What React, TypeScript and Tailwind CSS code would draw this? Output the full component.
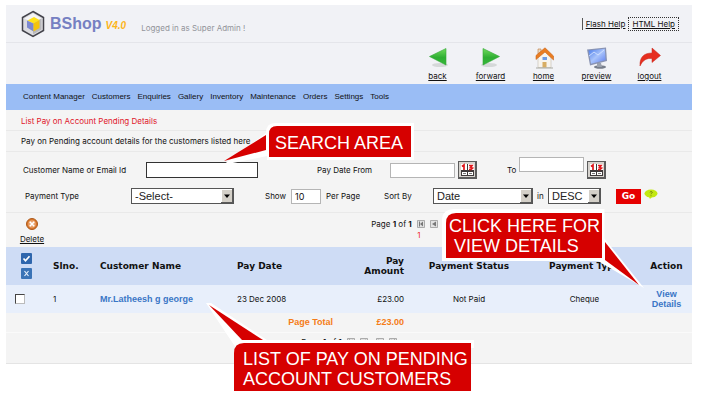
import type { ReactNode } from "react";

const navItems = [
  "Content Manager",
  "Customers",
  "Enquiries",
  "Gallery",
  "Inventory",
  "Maintenance",
  "Orders",
  "Settings",
  "Tools",
];

function Logo() {
  return (
    <svg width="24" height="28" viewBox="0 0 24 28" aria-hidden="true">
      <path d="M12 1.5 22.5 7.5v13L12 26.5 1.5 20.5v-13Z" fill="#dcdce0" stroke="#43434b" strokeWidth="1.5" />
      <path d="M12 3.5 20.5 8.5 12 13 3.5 8.5Z" fill="#f5f5f7" />
      <path d="M12 13 20.5 8.5v11L12 24.5Z" fill="#b9b9bd" />
      <path d="M6.5 10.5 13 7l5.5 3-6 3.5Z" fill="#ffe21a" />
      <path d="M6 10.5 12.5 13.500v8L6 17.500Z" fill="#7c88cf" />
      <path d="M12.5 13.500 18.500 10v8l-6 3.500Z" fill="#f4c30c" />
    </svg>
  );
}

function ArrowIcon({ flip = false }: { flip?: boolean }) {
  return (
    <svg width="22" height="22" viewBox="0 0 22 22" className={flip ? "-scale-x-100" : ""} aria-hidden="true">
      <defs>
        <linearGradient id={flip ? "greenB" : "greenA"} x1="0" y1="0" x2="0" y2="1">
          <stop offset="0" stopColor="#6fdc5a" />
          <stop offset="0.55" stopColor="#2fae33" />
          <stop offset="1" stopColor="#35b83a" />
        </linearGradient>
      </defs>
      <ellipse cx="9" cy="18" rx="8" ry="2" fill="#d5d8d9" />
      <path d="M3 1.5 19.5 9.5 3 18Z" fill={flip ? "url(#greenB)" : "url(#greenA)"} stroke="#33a637" strokeWidth="0.6" />
    </svg>
  );
}

function HomeIcon() {
  return (
    <svg width="22" height="22" viewBox="0 0 22 22" aria-hidden="true">
      <path d="M5 10v10.5h13V10l-6.5-6Z" fill="#f7f4ee" stroke="#c9c3b8" strokeWidth="0.7" />
      <path d="M5 2h3v5H5Z" fill="#e9d9c4" stroke="#c07b3c" strokeWidth="0.6" />
      <path d="m3 12.500v-4L12 .8l8.500 8.200v4l-8.500-8Z" fill="#ea7d22" stroke="#c9651b" strokeWidth="0.6" />
      <path d="M9.5 10h4.500v3H9.500Z" fill="#6e9be6" />
      <path d="M9.5 15h4v5.500h-4Z" fill="#d7ad63" />
      <path d="M3 21h17" stroke="#a9a9a2" />
    </svg>
  );
}

function PreviewIcon() {
  return (
    <svg width="22" height="22" viewBox="0 0 22 22" aria-hidden="true">
      <defs>
        <linearGradient id="screen" x1="0" y1="0" x2="1" y2="1">
          <stop offset="0" stopColor="#4a7bea" />
          <stop offset="0.5" stopColor="#a9c4fb" />
          <stop offset="1" stopColor="#5c7df0" />
        </linearGradient>
      </defs>
      <ellipse cx="14" cy="20" rx="6" ry="1.8" fill="#777e8b" />
      <path d="M11 16h4l1 4h-5Z" fill="#9aa1ae" />
      <path d="M1 2.5 20 .5l1 13.500L4 18.500Z" fill="#8993b2" />
      <path d="M2.5 3.5 18.8 1.800l.8 11.200L5 16.800Z" fill="url(#screen)" />
      <path d="m3 9 5-4 4 3 6-5" stroke="#d3e1ff" strokeWidth="0.9" fill="none" />
    </svg>
  );
}

function LogoutIcon() {
  return (
    <svg width="22" height="22" viewBox="0 0 22 22" aria-hidden="true">
      <path d="M1 19C.5 10 5 6 13 6V1l8.500 7.500-8.500 7V11.500C7.500 11 4 13 1 19Z" fill="#e62e1f" stroke="#c4281d" strokeWidth="0.5" />
    </svg>
  );
}

const tools: { label: string; icon: ReactNode }[] = [
  { label: "back", icon: <ArrowIcon flip /> },
  { label: "forward", icon: <ArrowIcon /> },
  { label: "home", icon: <HomeIcon /> },
  { label: "preview", icon: <PreviewIcon /> },
  { label: "logout", icon: <LogoutIcon /> },
];

function CalendarButton({ label }: { label: string }) {
  return (
    <button type="button" aria-label={label} className="h-[18px] w-[19px] shrink-0">
      <svg width="19" height="18" viewBox="0 0 19 18" aria-hidden="true">
        <path d="M0 0h19v18H0Z" fill="#5c5c5c" />
        <path d="M1 1h16v15H1Z" fill="#d6d3ce" />
        <path d="M3 3h13v12H3Z" fill="#3f3a3a" />
        <path d="M3 3h6v6H3ZM10 3h6v6h-6ZM4 11h5v3H4ZM10 11h5v3h-5Z" fill="#fff" />
        <path d="M4 5.5 6 4V9M11 4.500h3L12.500 6.500l2 .6L13 8.500h-2" stroke="#e0161b" strokeWidth="1.7" fill="none" />
        <path d="M5 12.500h3M11 12.500h3" stroke="#777" strokeWidth="1.2" />
      </svg>
    </button>
  );
}

function SelectBox({ id, options, width }: { id: string; options: string[]; width: string }) {
  return (
    <div className={`relative h-4 shrink-0 ${width}`}>
      <select
        id={id}
        className="block h-4 w-full appearance-none border border-[#555] bg-white pl-[3px] font-['Liberation_Sans',Arial,sans-serif] text-[11px] leading-[14px] text-[#222]"
      >
        {options.map((o) => (
          <option key={o}>{o}</option>
        ))}
      </select>
      <svg className="pointer-events-none absolute top-px right-px" width="12" height="14" viewBox="0 0 12 14" aria-hidden="true">
        <path d="M0 0h12v14H0Z" fill="#5a5a5a" />
        <path d="M0 0h11v13H0Z" fill="#fff" />
        <path d="M1 1h10v12H1Z" fill="#d4d0c8" />
        <path d="M3 5.5h6l-3 3.500Z" fill="#000" />
      </svg>
    </div>
  );
}

function PagerArrow({ label, d }: { label: string; d: string }) {
  return (
    <button type="button" aria-label={label} className="size-2">
      <svg width="8" height="8" viewBox="0 0 8 8" aria-hidden="true">
        <path d="M.5.5h7v7h-7Z" fill="#e2e2e2" stroke="#9b9b9b" strokeWidth="0.8" />
        <path d={d} fill="#777" />
      </svg>
    </button>
  );
}

function Pager() {
  return (
    <div className="flex items-center justify-center">
      <span>
        Page <b>1</b> of <b>1</b>
      </span>
      <div className="ml-[5px] flex gap-[5px]">
        <PagerArrow label="First page" d="M6 1.5v5L3 4ZM2 1.5h1v5H2Z" />
        <PagerArrow label="Previous page" d="M6 1.5v5L2 4Z" />
      </div>
      <div className="ml-2 flex gap-[5px]">
        <PagerArrow label="Next page" d="M2 1.5v5L6 4Z" />
        <PagerArrow label="Last page" d="M2 1.5v5L5 4ZM5 1.5h1v5H5Z" />
      </div>
    </div>
  );
}

function Callouts() {
  return (
    <div className="font-['Liberation_Sans',Arial,sans-serif] text-[18px] text-white">
      <div className="absolute top-[126px] left-[269px]">
        <svg className="absolute -top-[3px] -left-[50px]" width="196" height="46" viewBox="0 0 196 46" aria-hidden="true">
          <path d="M47 10Q47 0 56 0h139v37H48v-4L4 42Z" fill="#fff" />
          <path d="M47 12V27L5 38Z" fill="#d60000" />
          <path d="M50 34V11q0-8 8-8h134v31Z" fill="#d60000" />
        </svg>
        <div className="relative px-[6px] pt-[7px] leading-5 whitespace-nowrap">SEARCH AREA</div>
      </div>

      <div className="absolute top-[213px] left-[446px]">
        <svg className="absolute -top-1 -left-1" width="204" height="84" viewBox="0 0 204 84" aria-hidden="true">
          <path d="M0 52V10Q1 0 12 0h150v29l40 50-46-27Z" fill="#fff" />
          <path d="M163 33 197 76 163 51Z" fill="#d60000" />
          <path d="M161 0v52" stroke="#fff" strokeWidth="3" />
          <path d="M4 49V14q0-10 10-10h146v45Z" fill="#d60000" />
        </svg>
        <div className="relative pt-[3px] pl-[3px] leading-5 whitespace-nowrap">
          CLICK HERE FOR
          <br />
          <span className="pl-[5px]">VIEW DETAILS</span>
        </div>
      </div>

      <div className="absolute top-[343px] left-[234px]">
        <svg className="absolute -top-10 -left-7" width="269" height="90" viewBox="0 0 269 90" aria-hidden="true">
          <path d="M0 0h5l56 37h207v8H30Z" fill="#fff" />
          <path d="M3 2 36 37H57Z" fill="#d60000" />
          <path d="M28 88V50q0-10 10-10h227v48Z" fill="#d60000" />
        </svg>
        <div className="relative pt-[6px] pl-[9px] leading-5 whitespace-nowrap">
          LIST OF PAY ON PENDING
          <br />
          ACCOUNT CUSTOMERS
        </div>
      </div>
    </div>
  );
}

export default function App() {
  return (
    <div className="relative min-h-screen bg-white pt-[5px] pr-[10px] pl-[6px] font-[Inter,Arial,sans-serif] text-[8px] leading-[10px] text-[#111]">
      <div className="border-b border-[#e4e4e4] bg-[#f4f4f4]">
        <header className="bg-[#f1f2f6]">
          <div className="flex h-[38px] items-center border-b border-[#e4e5ea] pr-[13px] pl-[15px]">
            <Logo />
            <h1 className="ml-[5px] font-['Liberation_Sans',Arial,sans-serif] text-[16px] leading-5 font-bold text-[#7680c2]">
              BShop
            </h1>
            <span className="mt-1 ml-1 font-['Liberation_Sans',Arial,sans-serif] text-[10px] font-bold text-[#fcb51b] italic">
              V4.0
            </span>
            <span className="mt-2 ml-[15px] text-[#92949a]">Logged in as Super Admin !</span>
            <div className="ml-auto flex items-center gap-[3px]">
              <a href="#flash-help" className="border-l border-[#555] py-px pl-[3px] underline">
                Flash Help
              </a>
              <a href="#html-help" className="border border-dotted border-[#333] px-[3px] py-px underline">
                HTML Help
              </a>
            </div>
          </div>
          <div className="flex h-[41px] justify-end pt-1 pr-4">
            {tools.map((t) => (
              <a key={t.label} href={`#${t.label}`} className="flex w-[53px] flex-col items-center gap-[2px] underline">
                {t.icon}
                {t.label}
              </a>
            ))}
          </div>
        </header>

        <nav className="flex h-[26px] items-center gap-[7px] bg-[#9abdf5] pl-[17px] font-['Liberation_Sans',Arial,sans-serif] whitespace-nowrap">
          {navItems.map((n) => (
            <a key={n} href="#menu">
              {n}
            </a>
          ))}
        </nav>

        <h2 className="border-b border-[#e9e9e9] pt-[6px] pb-1 pl-[15px] text-[#e0162b]">List Pay on Account Pending Details</h2>
        <p className="border-b border-[#e9e9e9] pt-[5px] pb-[5px] pl-[15px]">
          Pay on Pending account details for the customers listed here
        </p>

        <form className="border-b border-[#e9e9e9] pt-[5px] pb-[3px] whitespace-nowrap" onSubmit={(e) => e.preventDefault()}>
          <div className="flex h-[26px] items-center pl-[17px]">
            <label htmlFor="customer" className="w-[123px] shrink-0">
              Customer Name or Email Id
            </label>
            <input id="customer" className="h-4 w-[112px] border border-[#333] bg-white px-1" />
            <label htmlFor="from" className="ml-[59px] w-[73px] shrink-0">
              Pay Date From
            </label>
            <input id="from" className="mr-[3px] h-[15px] w-[65px] border border-[#b5b5b5] bg-white px-1" />
            <CalendarButton label="Choose start date" />
            <label htmlFor="to" className="ml-[30px] w-3 shrink-0">
              To
            </label>
            <input id="to" className="mr-[3px] h-[15px] w-[65px] self-start border border-[#b5b5b5] bg-white px-1" />
            <CalendarButton label="Choose end date" />
          </div>
          <div className="flex h-[26px] items-center pl-[19px]">
            <label htmlFor="type" className="w-[106px] shrink-0">
              Payment Type
            </label>
            <SelectBox id="type" width="w-[103px]" options={["-Select-", "Cheque"]} />
            <label htmlFor="show" className="ml-[31px] w-[26px]">
              Show
            </label>
            <input id="show" defaultValue="10" className="h-[15px] w-[30px] border border-[#b5b5b5] bg-white pl-[3px] text-[9px]" />
            <span className="ml-[5px] w-[58px]">Per Page</span>
            <label htmlFor="sort" className="w-[49px]">
              Sort By
            </label>
            <SelectBox id="sort" width="w-[100px]" options={["Date", "Name"]} />
            <label htmlFor="order" className="ml-1 w-[11px]">
              in
            </label>
            <SelectBox id="order" width="w-[53px]" options={["DESC", "ASC"]} />
            <button type="submit" className="ml-[15px] h-[15px] w-[25px] bg-[#e60000] font-['DejaVu_Sans',sans-serif] text-[9px] font-bold text-white">
              Go
            </button>
            <button type="button" aria-label="Help" className="ml-[3px] self-start pt-[6px]">
              <svg width="14" height="10" viewBox="0 0 14 10" aria-hidden="true">
                <ellipse cx="7" cy="4.5" rx="6.5" ry="4" fill="#c2e812" />
                <path d="m5 8 1 2 2-2Z" fill="#c2e812" />
                <path d="M5.8 3.3q1.200-1.500 2.400-.3c.6 1-1.200 1.200-1.200 2.300M7 6.300v.9" stroke="#66720c" strokeWidth="0.8" fill="none" />
              </svg>
            </button>
          </div>
        </form>

        <div className="relative flex h-[34px] justify-center">
          <button type="button" className="absolute top-[5px] left-[14px] flex w-6 flex-col items-center gap-1 underline">
            <svg width="12" height="12" viewBox="0 0 12 12" aria-hidden="true">
              <circle cx="6" cy="6" r="5.5" fill="#d9782d" stroke="#ad5a1c" />
              <circle cx="6" cy="6" r="3.8" fill="#eaa36d" />
              <path d="m3.8 3.8 4.4 4.400M8.200 3.800 3.800 8.200" stroke="#fff" strokeWidth="1.6" />
            </svg>
            Delete
          </button>
          <div className="ml-[140px] pt-[6px] text-center">
            <Pager />
            <div className="mt-px text-[#f02a2a]">1</div>
          </div>
        </div>

        <table className="w-full table-fixed">
          <colgroup>
            <col className="w-[41px]" />
            <col className="w-[47px]" />
            <col />
            <col className="w-[110px]" />
            <col className="w-[69px]" />
            <col className="w-[118px]" />
            <col className="w-[113px]" />
            <col className="w-[51px]" />
          </colgroup>
          <thead className="h-[38px] bg-[#cedcf5] text-left font-['DejaVu_Sans',Verdana,sans-serif] text-[9px]">
            <tr>
              <th className="pl-[15px]">
                <div className="flex flex-col gap-1">
                  <button type="button" aria-label="Select all" className="size-[11px]">
                    <svg width="11" height="11" viewBox="0 0 11 11" aria-hidden="true">
                      <rect width="11" height="11" rx="1" fill="#2e66ad" />
                      <path d="m2.5 5.5 2 2.200 4-4.400" stroke="#fff" strokeWidth="1.7" fill="none" />
                    </svg>
                  </button>
                  <button type="button" aria-label="Clear all" className="size-[11px]">
                    <svg width="11" height="11" viewBox="0 0 11 11" aria-hidden="true">
                      <rect width="11" height="11" rx="1" fill="#3a73b6" />
                      <path d="m3.5 3 4 5M7.500 3l-4 5" stroke="#e6f0fb" strokeWidth="1.2" />
                    </svg>
                  </button>
                </div>
              </th>
              <th className="pl-[6px]">Slno.</th>
              <th className="pl-[6px]">Customer Name</th>
              <th className="pl-[6px]">Pay Date</th>
              <th className="pr-[6px] pl-5 text-right">Pay Amount</th>
              <th className="text-center whitespace-nowrap">Payment Status</th>
              <th className="text-center whitespace-nowrap">Payment Type</th>
              <th className="text-center">Action</th>
            </tr>
          </thead>
          <tbody>
            <tr className="h-7 bg-[#e8effb]">
              <td className="pl-[9px]">
                <input
                  type="checkbox"
                  aria-label="Select payment 1"
                  className="block size-[10px] appearance-none border border-t-[#444] border-r-[#bbb] border-b-[#bbb] border-l-[#444] bg-white"
                />
              </td>
              <td className="pl-[6px]">1</td>
              <td className="pl-[6px]">
                <a href="#customer-details" className="font-['Liberation_Sans',Arial,sans-serif] text-[9px] font-bold text-[#3a76c6]">
                  Mr.Latheesh g george
                </a>
              </td>
              <td className="pl-[6px]">23 Dec 2008</td>
              <td className="pr-[6px] text-right">£23.00</td>
              <td className="text-center">Not Paid</td>
              <td className="text-center">Cheque</td>
              <td className="text-center">
                <a href="#view" className="block px-2 font-['Liberation_Sans',Arial,sans-serif] text-[9px] font-bold text-[#3a76c6]">
                  View Details
                </a>
              </td>
            </tr>
            <tr className="h-[19px] border-b border-[#fafafa] font-['Liberation_Sans',Arial,sans-serif] text-[9px] font-bold text-[#f57c17]">
              <td colSpan={4} className="pr-2 text-right">
                Page Total
              </td>
              <td className="pr-[6px] text-right">£23.00</td>
              <td colSpan={3} />
            </tr>
          </tbody>
        </table>
        <div className="h-[30px] pt-1">
          <Pager />
        </div>
      </div>
      <Callouts />
    </div>
  );
}
